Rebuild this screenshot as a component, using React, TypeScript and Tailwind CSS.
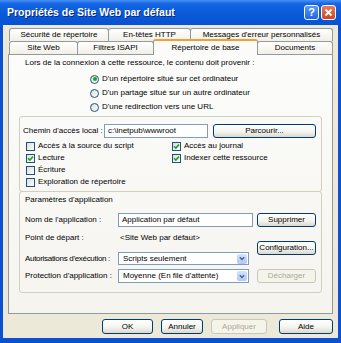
import type { ReactNode } from "react";

const panelBorder = "border-[#919b9c]";

function Btn({ children, className, disabled }: { children: ReactNode; className: string; disabled?: boolean }) {
  return (
    <div
      className={`flex items-center justify-center rounded-[3px] border leading-none ${
        disabled
          ? "border-[#c9c7ba] bg-[#f5f4ea] text-[#aca899]"
          : "border-[#003c74] bg-[linear-gradient(180deg,#ffffff_0%,#f4f4f0_55%,#dcd8cc_100%)] text-black"
      } ${className}`}
    >
      {children}
    </div>
  );
}

function Radio({ checked, label }: { checked?: boolean; label: string }) {
  return (
    <div className="flex h-[14px] items-center gap-[3px]">
      <span className="flex h-[9px] w-[9px] items-center justify-center rounded-full border border-[#1c5180] bg-[linear-gradient(135deg,#dcdcd7,#ffffff)]">
        {checked && <span className="h-[4px] w-[4px] rounded-full bg-[#21a121]" />}
      </span>
      <span>{label}</span>
    </div>
  );
}

function Check({ checked, label }: { checked?: boolean; label: string }) {
  return (
    <div className="flex h-[12px] items-center gap-[3px]">
      <span className="flex h-[9px] w-[9px] items-center justify-center border border-[#1c5180] bg-[linear-gradient(135deg,#dcdcd7,#ffffff)]">
        {checked && (
          <svg width="7" height="7" viewBox="0 0 7 7">
            <path d="M1 3.2 L2.8 5 L6 1.6" fill="none" stroke="#21a121" strokeWidth="1.6" />
          </svg>
        )}
      </span>
      <span>{label}</span>
    </div>
  );
}

function Select({ value }: { value: string }) {
  return (
    <div className="flex h-full w-[131px] items-center border border-[#7f9db9] bg-white pl-[4px]">
      <span className="flex-1">{value}</span>
      <span className="mr-px flex h-[10px] w-[10px] items-center justify-center rounded-[2px] bg-[linear-gradient(180deg,#d4e2fc,#b0c9f7)]">
        <svg width="6" height="5" viewBox="0 0 6 5">
          <path d="M0.8 1.2 L3 3.4 L5.2 1.2" fill="none" stroke="#4d6185" strokeWidth="1.4" />
        </svg>
      </span>
    </div>
  );
}

function Tab({ label, className, active }: { label: string; className: string; active?: boolean }) {
  return (
    <div
      className={`flex items-center justify-center rounded-t-[3px] border-x border-t ${panelBorder} ${
        active
          ? "relative z-10 -mb-px -mt-[2px] h-[16px] border-t-2 border-t-[#f0a030] bg-[#fbfbf9]"
          : "-ml-px h-[13px] bg-[linear-gradient(180deg,#ffffff,#f1efe6)]"
      } ${className}`}
    >
      {label}
    </div>
  );
}

export default function App() {
  return (
    <div className="flex h-[343px] w-[341px] flex-col whitespace-nowrap bg-[#0b50d2] font-['Liberation_Sans',Arial,sans-serif] text-[8px] text-black">
      {/* Title bar */}
      <div className="flex h-[25px] items-center bg-[linear-gradient(180deg,#4a90f5_0%,#1466e4_15%,#0a5ad8_55%,#0652d2_100%)] pl-[7px] pr-[5px]">
        <span className="flex-1 text-[10.5px] font-bold text-white [text-shadow:1px_1px_0_#0a2a80]">
          Propriétés de Site Web par défaut
        </span>
        <div className="flex gap-[2px]">
          <div className="flex h-[15px] w-[15px] items-center justify-center rounded-[3px] border border-white bg-[linear-gradient(180deg,#5a9af7,#2263e6)] text-[11px] font-bold leading-none text-white">
            ?
          </div>
          <div className="flex h-[15px] w-[15px] items-center justify-center rounded-[3px] border border-white bg-[linear-gradient(180deg,#eb7a5c,#d2441f)]">
            <svg width="9" height="9" viewBox="0 0 9 9">
              <path d="M1.5 1.5 L7.5 7.5 M7.5 1.5 L1.5 7.5" stroke="white" strokeWidth="1.8" />
            </svg>
          </div>
        </div>
      </div>

      {/* Body */}
      <div className="mx-[3px] mb-[5px] flex flex-1 flex-col bg-[#ece9d8]">
        <div className="ml-[5px] mt-[3px] w-[325px]">
          {/* Tabs */}
          <div className="flex pl-[2px]">
            <Tab label="Sécurité de répertoire" className="w-[100px]" />
            <Tab label="En-têtes HTTP" className="w-[83px]" />
            <Tab label="Messages d'erreur personnalisés" className="w-[143px]" />
          </div>
          <div className="flex items-end pl-[2px]">
            <Tab label="Site Web" className="w-[69px]" />
            <Tab label="Filtres ISAPI" className="w-[77px]" />
            <Tab label="Répertoire de base" active className="-ml-px w-[105px]" />
            <Tab label="Documents" className="w-[76px]" />
          </div>

          {/* Panel */}
          <div className={`flex h-[260px] flex-col border ${panelBorder} bg-[linear-gradient(180deg,#fcfcfb,#f5f4ef)]`}>
            <div className="pl-[16px] pt-[2px] leading-[11px]">
              Lors de la connexion à cette ressource, le contenu doit provenir :
            </div>
            <div className="mt-[4px] pl-[81px]">
              <Radio checked label="D'un répertoire situé sur cet ordinateur" />
              <Radio label="D'un partage situé sur un autre ordinateur" />
              <Radio label="D'une redirection vers une URL" />
            </div>

            {/* Local path group */}
            <div className="mx-[10px] mt-[2px] h-[76px] rounded-[3px] border border-[#d0d0bf]">
              <div className="mt-[7px] flex h-[14px] items-center pl-[3px]">
                <span className="w-[81px]">Chemin d'accès local :</span>
                <div className="flex h-full w-[104px] items-center border border-[#7f9db9] bg-white pl-[3px]">
                  c:\inetpub\wwwroot
                </div>
                <Btn className="ml-[5px] h-full w-[103px]">Parcourir...</Btn>
              </div>
              <div className="mt-[2px] grid grid-cols-[146px_1fr] pl-[6px]">
                <Check label="Accès à la source du script" />
                <Check checked label="Accès au journal" />
                <Check checked label="Lecture" />
                <Check checked label="Indexer cette ressource" />
                <Check label="Écriture" />
                <div />
                <Check label="Exploration de répertoire" />
              </div>
            </div>

            {/* Application settings group */}
            <div className="mx-[10px] -mt-px h-[102px] rounded-[3px] border border-[#d0d0bf]">
              <div className="pl-[5px] pt-[2px] leading-[11px]">Paramètres d'application</div>
              <div className="mt-[8px] flex pl-[5px]">
                <div className="flex flex-col">
                  <div className="flex h-[14px] items-center">
                    <span className="w-[93px]">Nom de l'application :</span>
                    <div className="flex h-full w-[135px] items-center border border-[#7f9db9] bg-white pl-[3px]">
                      Application par défaut
                    </div>
                  </div>
                  <div className="mt-[5px] flex h-[12px] items-center">
                    <span className="w-[95px]">Point de départ :</span>
                    <span>&lt;Site Web par défaut&gt;</span>
                  </div>
                  <div className="mt-[8px] flex h-[13px] items-center">
                    <span className="w-[93px] tracking-[-0.3px]">Autorisations d'exécution :</span>
                    <Select value="Scripts seulement" />
                  </div>
                  <div className="mt-[4px] flex h-[14px] items-center">
                    <span className="w-[93px]">Protection d'application :</span>
                    <Select value="Moyenne (En file d'attente)" />
                  </div>
                </div>
                <div className="ml-[4px] flex flex-col gap-[14px]">
                  <Btn className="h-[14px] w-[59px]">Supprimer</Btn>
                  <Btn className="h-[14px] w-[59px]">Configuration...</Btn>
                  <Btn disabled className="h-[14px] w-[59px]">Décharger</Btn>
                </div>
              </div>
            </div>
          </div>
        </div>

        {/* Dialog buttons */}
        <div className="mt-[5px] flex h-[15px]">
          <Btn className="ml-[99px] w-[51px]">OK</Btn>
          <Btn className="ml-[8px] w-[42px]">Annuler</Btn>
          <Btn disabled className="ml-[8px] w-[56px]">Appliquer</Btn>
          <Btn className="ml-[12px] w-[54px]">Aide</Btn>
        </div>
      </div>
    </div>
  );
}
